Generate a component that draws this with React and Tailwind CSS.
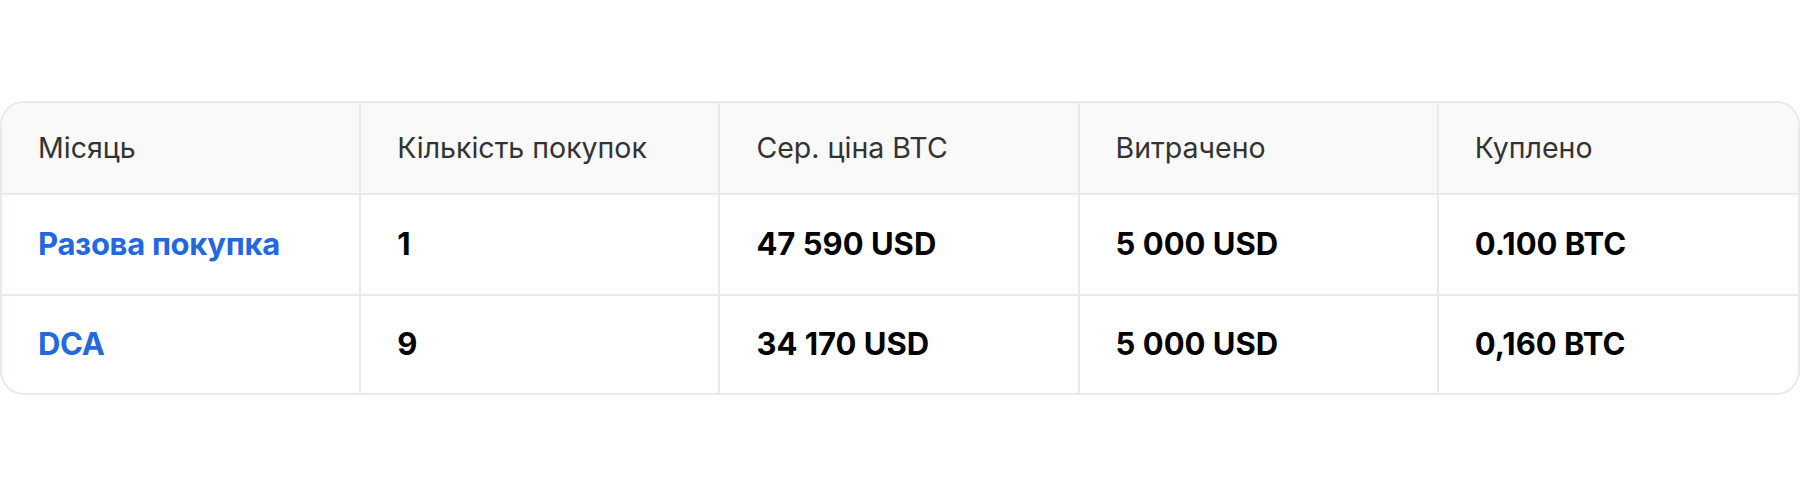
const HEADERS = ['Місяць', 'Кількість покупок', 'Сер. ціна BTC', 'Витрачено', 'Куплено'];

const ROWS = [
  ['Разова покупка', '1', '47 590 USD', '5 000 USD', '0.100 BTC'],
  ['DCA', '9', '34 170 USD', '5 000 USD', '0,160 BTC'],
];

export default function App() {
  return (
    <div className="w-[1800px] h-[496px] bg-white pt-[101px]" style={{ fontFamily: 'Inter, "Noto Sans", sans-serif' }}>
      <div className="border-2 border-[#e7eaef] rounded-[24px] overflow-hidden">
        <div className="grid grid-cols-5 bg-[#f9f9f9] border-b-2 border-[#e7eaef]">
          {HEADERS.map((h, i) => (
            <div
              key={h}
              className={`h-[90px] flex items-center pl-[36px] text-[28.5px] text-[#333333] ${i < 4 ? 'border-r-2 border-[#e7eaef]' : ''}`}
            >
              {h}
            </div>
          ))}
        </div>
        {ROWS.map((row, r) => (
          <div key={r} className={`grid grid-cols-5 ${r === 0 ? 'border-b-2 border-[#e7eaef]' : ''}`}>
            {row.map((cell, i) => (
              <div
                key={i}
                className={`${r === 0 ? 'h-[99px]' : 'h-[97px]'} flex items-center pl-[36px] text-[31px] font-bold ${i === 0 ? 'text-[#2468e0] tracking-[-0.3px]' : 'text-black'} ${i < 4 ? 'border-r-2 border-[#e7eaef]' : ''}`}
              >
                {cell}
              </div>
            ))}
          </div>
        ))}
      </div>
    </div>
  );
}
